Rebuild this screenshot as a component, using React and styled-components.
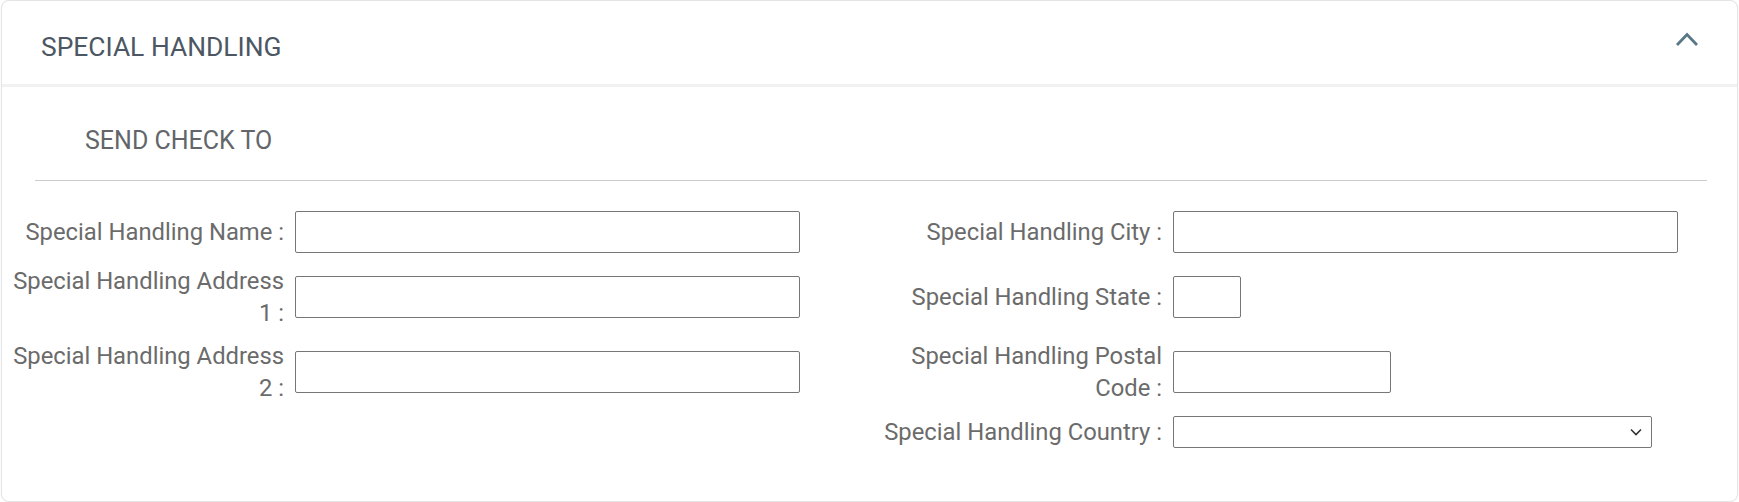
import React from "react";
import styled, { createGlobalStyle } from "styled-components";

const GlobalStyle = createGlobalStyle`
  html, body {
    margin: 0;
    padding: 0;
    background: #ffffff;
  }
  body {
    font-family: Roboto, "Liberation Sans", Arial, sans-serif;
  }
  * { box-sizing: border-box; }
`;

const Card = styled.section`
  margin: 0 1px 0 1px;
  height: 502px;
  border: 1px solid #e4e4e4;
  border-radius: 8px;
  background: #fff;
  box-shadow: 0 0 2px rgba(0, 0, 0, 0.06);
  overflow: hidden;
`;

const Header = styled.header`
  display: flex;
  justify-content: space-between;
  align-items: flex-start;
  height: 86px;
  padding: 0 38px 0 39px;
  border-bottom: 3px solid #f1f1f1;
`;

const Title = styled.h2`
  margin: 31px 0 0 0;
  font-size: 26.4px;
  line-height: 30px;
  font-weight: 400;
  color: #4c5763;
`;

const ToggleButton = styled.button`
  margin-top: 30px;
  padding: 0;
  border: 0;
  background: transparent;
  width: 24px;
  height: 16px;
  display: flex;
  align-items: center;
  justify-content: center;
  cursor: pointer;
`;

const Body = styled.div`
  display: flex;
  flex-direction: column;
`;

const SubTitle = styled.h3`
  margin: 40px 0 0 0;
  padding-left: 83px;
  font-size: 25px;
  line-height: 28px;
  font-weight: 400;
  color: #62666a;
`;

const Divider = styled.hr`
  margin: 25px 30px 0 33px;
  border: 0;
  height: 1px;
  background: #cccccc;
`;

const FormGrid = styled.div`
  margin-top: 30px;
  display: grid;
  grid-template-columns: 282px 572px 284px 1fr;
  column-gap: 11px;
  row-gap: 11.5px;
  align-items: center;
`;

const Label = styled.label`
  grid-column: ${(p) => p.$col};
  text-align: right;
  font-size: 23.8px;
  line-height: 32px;
  color: #6b6b6b;
`;

const Field = styled.div`
  grid-column: ${(p) => p.$col};
  display: flex;
  align-items: center;
`;

const TextInput = styled.input`
  width: ${(p) => p.$w}px;
  height: 42px;
  border: 1px solid #767676;
  border-radius: 2px;
  padding: 0 8px;
  font-family: inherit;
  font-size: 18px;
  background: #fff;
  outline: none;
`;

const SelectWrap = styled.div`
  position: relative;
  width: ${(p) => p.$w}px;
  height: 32px;
`;

const Select = styled.select`
  appearance: none;
  -webkit-appearance: none;
  width: 100%;
  height: 100%;
  border: 1px solid #767676;
  border-radius: 2px;
  padding: 0 28px 0 6px;
  font-family: inherit;
  font-size: 16px;
  background: #fff;
  color: #333;
  outline: none;
`;

const SelectArrow = styled.svg`
  position: absolute;
  right: 10px;
  top: 50%;
  transform: translateY(-50%);
  pointer-events: none;
`;

const rows = [
  {
    left: { label: "Special Handling Name :", w: 505 },
    right: { label: "Special Handling City :", w: 505 },
  },
  {
    left: { label: "Special Handling Address 1 :", w: 505 },
    right: { label: "Special Handling State :", w: 68 },
  },
  {
    left: { label: "Special Handling Address 2 :", w: 505 },
    right: { label: "Special Handling Postal Code :", w: 218 },
  },
];

function ChevronUp() {
  return (
    <svg width="24" height="16" viewBox="0 0 24 16" fill="none">
      <polyline
        points="2,14 12,3.5 22,14"
        stroke="#587888"
        strokeWidth="2.8"
        strokeLinejoin="miter"
        fill="none"
      />
    </svg>
  );
}

export default function App() {
  return (
    <>
      <GlobalStyle />
      <Card>
        <Header>
          <Title>SPECIAL HANDLING</Title>
          <ToggleButton aria-label="Collapse">
            <ChevronUp />
          </ToggleButton>
        </Header>
        <Body>
          <SubTitle>SEND CHECK TO</SubTitle>
          <Divider />
          <FormGrid>
            {rows.map((r, i) => (
              <React.Fragment key={i}>
                <Label $col={1}>{r.left.label}</Label>
                <Field $col={2}>
                  <TextInput type="text" $w={r.left.w} />
                </Field>
                <Label $col={3}>{r.right.label}</Label>
                <Field $col={4}>
                  <TextInput type="text" $w={r.right.w} />
                </Field>
              </React.Fragment>
            ))}
            <Label $col={3}>Special Handling Country :</Label>
            <Field $col={4}>
              <SelectWrap $w={479}>
                <Select defaultValue="">
                  <option value=""></option>
                </Select>
                <SelectArrow width="12" height="8" viewBox="0 0 12 8">
                  <polyline
                    points="1,1.5 6,6.5 11,1.5"
                    stroke="#333"
                    strokeWidth="1.6"
                    fill="none"
                  />
                </SelectArrow>
              </SelectWrap>
            </Field>
          </FormGrid>
        </Body>
      </Card>
    </>
  );
}
